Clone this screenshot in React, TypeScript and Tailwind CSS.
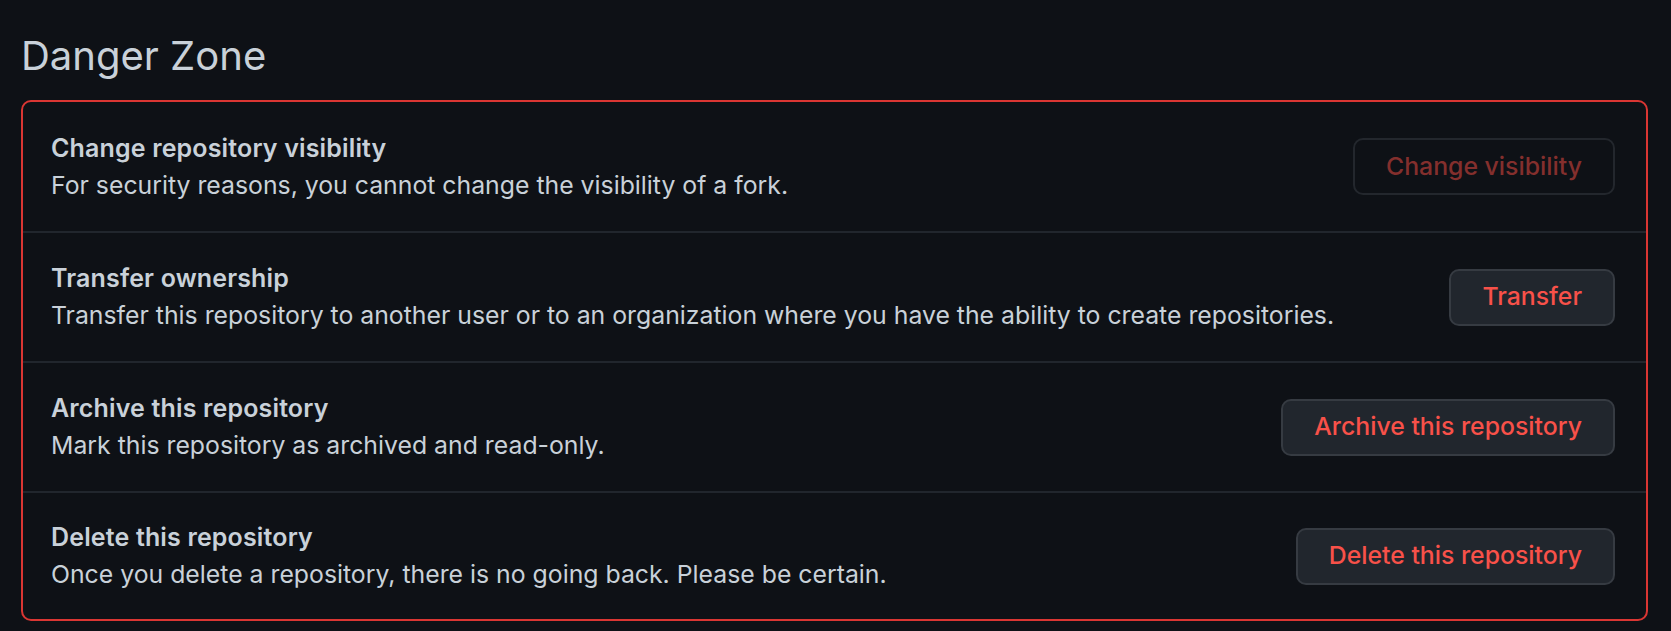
const rows = [
  {
    title: 'Change repository visibility',
    desc: 'For security reasons, you cannot change the visibility of a fork.',
    action: 'Change visibility',
    disabled: true,
  },
  {
    title: 'Transfer ownership',
    desc: 'Transfer this repository to another user or to an organization where you have the ability to create repositories.',
    action: 'Transfer',
  },
  {
    title: 'Archive this repository',
    desc: 'Mark this repository as archived and read-only.',
    action: 'Archive this repository',
  },
  {
    title: 'Delete this repository',
    desc: 'Once you delete a repository, there is no going back. Please be certain.',
    action: 'Delete this repository',
  },
];

export default function App() {
  return (
    <div
      className="min-h-[631px] w-full bg-[#0e1116] pl-[21px] pr-[23px] pt-[32px] text-[#c9d1d9]"
      style={{ fontFamily: 'Inter, "Noto Sans", sans-serif' }}
    >
      <h2 className="mb-[20px] text-[40px] leading-[48px] font-normal text-[#c9d1d9]">Danger Zone</h2>

      <div className="overflow-hidden rounded-[10px] border-2 border-[#da3633]">
        {rows.map((row, i) => (
          <div
            key={row.title}
            className={
              'flex items-center justify-between pl-[28px] pr-[31px] ' +
              (i === 0 ? 'h-[129px]' : i === 3 ? 'h-[128px] border-t-2 border-[#21262d]' : 'h-[130px] border-t-2 border-[#21262d]')
            }
          >
            <div>
              <div className="text-[25px] leading-[37px] font-semibold tracking-[0.15px] text-[#c9d1d9]">{row.title}</div>
              <div className="text-[24.8px] leading-[37px] text-[#c9d1d9]">{row.desc}</div>
            </div>
            {row.disabled ? (
              <button className="h-[57px] rounded-[10px] border-2 border-[#23272d] bg-transparent px-[31px] text-[24.8px] font-medium text-[#842f2d]">
                {row.action}
              </button>
            ) : (
              <button className="h-[57px] rounded-[10px] border-2 border-[#363b42] bg-[#21262d] px-[31px] text-[24.8px] font-medium text-[#f85149]">
                {row.action}
              </button>
            )}
          </div>
        ))}
      </div>
    </div>
  );
}
